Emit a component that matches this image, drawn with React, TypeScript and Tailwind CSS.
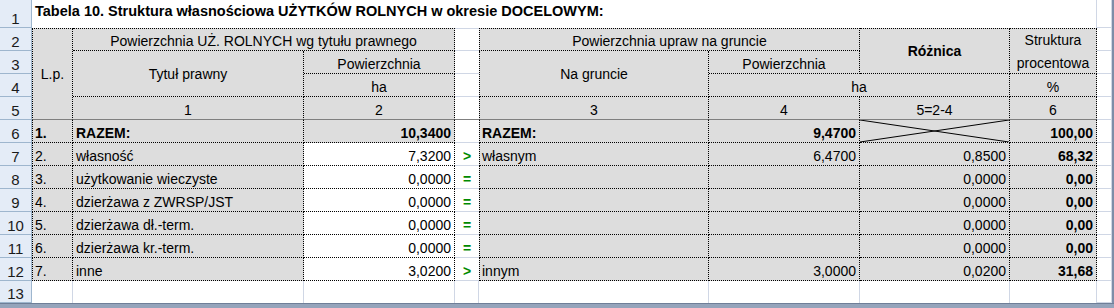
import React from "react";

// excel-like borders: one arbitrary property per side so nothing collides
const R = "[border-right:1px_dotted_#000]";
const B = "[border-bottom:1px_dotted_#000]";
const T = "[border-top:1px_dotted_#000]";
const L = "[border-left:1px_dotted_#000]";
const SEP = "[border-bottom:1px_solid_#7f7f7f]";
const GR = "[border-right:1px_solid_#d0d7e5]";
const GB = "[border-bottom:1px_solid_#d0d7e5]";
const GT = "[border-top:1px_solid_#d0d7e5]";
const GRAY = "bg-[#dddddd]";

const ROW = [
  "row-start-1",
  "row-start-2",
  "row-start-3",
  "row-start-4",
  "row-start-5",
  "row-start-6",
  "row-start-7",
  "row-start-8",
  "row-start-9",
  "row-start-10",
  "row-start-11",
  "row-start-12",
  "row-start-13",
];

type DataRow = {
  lp: string;
  label: string;
  area: string;
  sign: string;
  crop: string;
  cropArea: string;
  diff: string | null;
  pct: string;
  total?: boolean;
};

const rows: DataRow[] = [
  { lp: "1.", label: "RAZEM:", area: "10,3400", sign: "", crop: "RAZEM:", cropArea: "9,4700", diff: null, pct: "100,00", total: true },
  { lp: "2.", label: "własność", area: "7,3200", sign: ">", crop: "własnym", cropArea: "6,4700", diff: "0,8500", pct: "68,32" },
  { lp: "3.", label: "użytkowanie wieczyste", area: "0,0000", sign: "=", crop: "", cropArea: "", diff: "0,0000", pct: "0,00" },
  { lp: "4.", label: "dzierżawa z ZWRSP/JST", area: "0,0000", sign: "=", crop: "", cropArea: "", diff: "0,0000", pct: "0,00" },
  { lp: "5.", label: "dzierżawa dł.-term.", area: "0,0000", sign: "=", crop: "", cropArea: "", diff: "0,0000", pct: "0,00" },
  { lp: "6.", label: "dzierżawa kr.-term.", area: "0,0000", sign: "=", crop: "", cropArea: "", diff: "0,0000", pct: "0,00" },
  { lp: "7.", label: "inne", area: "3,0200", sign: ">", crop: "innym", cropArea: "3,0000", diff: "0,0200", pct: "31,68" },
];

const hdr = "flex items-center justify-center text-center";
const one = "flex items-end justify-center pb-[1px]";
const left = "flex items-end pl-[2px] pb-[1px] whitespace-nowrap overflow-hidden";
const right = "flex items-end justify-end pr-[3px] pb-[1px] whitespace-nowrap";

function Cross() {
  return (
    <svg className="h-full w-full" viewBox="0 0 149 22" preserveAspectRatio="none">
      <line x1="0" y1="0" x2="149" y2="22" stroke="#000" strokeWidth="1" vectorEffect="non-scaling-stroke" />
      <line x1="0" y1="22" x2="149" y2="0" stroke="#000" strokeWidth="1" vectorEffect="non-scaling-stroke" />
    </svg>
  );
}

export default function App() {
  return (
    <div className="flex h-[308px] w-[1114px] flex-col overflow-hidden bg-white font-['Liberation_Sans',Arial,sans-serif] text-[14px] leading-[16px] text-black">
      <div className="flex">
        <div className="grid grid-cols-[32px_41px_231px_151px_24px_230px_151px_150px_87px_15px] grid-rows-[28px_repeat(11,23px)_22px]">
          {/* row numbers */}
          {ROW.map((r, i) => (
            <div
              key={r}
              className={`${r} col-start-1 flex items-end justify-center bg-[#e4ecf7] text-[15px] leading-[17px] text-[#1a1a1a] [border-right:1px_solid_#9eb6ce] [border-bottom:1px_solid_#9eb6ce]`}
            >
              {i + 1}
            </div>
          ))}

          {/* title */}
          <div className={`row-start-1 col-start-2 col-span-8 flex items-start pl-[3px] pt-[3px] text-[14.5px] font-bold leading-[17px] whitespace-nowrap ${GR}`}>
            Tabela 10. Struktura własnościowa UŻYTKÓW ROLNYCH w okresie DOCELOWYM:
          </div>

          {/* header, left part */}
          <div className={`row-start-2 row-span-4 col-start-2 ${GRAY} ${hdr} ${T} ${L} ${R} ${SEP}`}>L.p.</div>
          <div className={`row-start-2 col-start-3 col-span-2 ${GRAY} ${one} ${T} ${R} ${B}`}>
            Powierzchnia UŻ. ROLNYCH wg tytułu prawnego
          </div>
          <div className={`row-start-3 row-span-2 col-start-3 ${GRAY} ${hdr} ${R} ${B}`}>Tytuł prawny</div>
          <div className={`row-start-3 col-start-4 ${GRAY} ${one} ${R} ${B}`}>Powierzchnia</div>
          <div className={`row-start-4 col-start-4 ${GRAY} ${one} ${R} ${B}`}>ha</div>
          <div className={`row-start-5 col-start-3 ${GRAY} ${one} ${R} ${SEP}`}>1</div>
          <div className={`row-start-5 col-start-4 ${GRAY} ${one} ${R} ${SEP}`}>2</div>

          {/* gap column */}
          <div className={`row-start-2 col-start-5 ${GT} ${GB}`} />
          <div className={`row-start-3 col-start-5 ${GB}`} />
          <div className={`row-start-4 col-start-5 ${GB}`} />
          <div className={`row-start-5 col-start-5 ${SEP}`} />

          {/* header, right part */}
          <div className={`row-start-2 col-start-6 col-span-2 ${GRAY} ${one} ${T} ${L} ${R} ${B}`}>
            Powierzchnia upraw na gruncie
          </div>
          <div className={`row-start-2 row-span-2 col-start-8 ${GRAY} ${hdr} font-bold ${T} ${R} ${B}`}>Różnica</div>
          <div className={`row-start-2 row-span-2 col-start-9 ${GRAY} ${hdr} flex-col leading-[23px] pt-[1px] ${T} ${R} ${B}`}>
            <span>Struktura</span>
            <span>procentowa</span>
          </div>
          <div className={`row-start-3 row-span-2 col-start-6 ${GRAY} ${hdr} ${L} ${R} ${B}`}>Na gruncie</div>
          <div className={`row-start-3 col-start-7 ${GRAY} ${one} ${R} ${B}`}>Powierzchnia</div>
          <div className={`row-start-4 col-start-7 col-span-2 ${GRAY} ${one} ${R} ${B}`}>ha</div>
          <div className={`row-start-4 col-start-9 ${GRAY} ${one} ${R} ${B}`}>%</div>
          <div className={`row-start-5 col-start-6 ${GRAY} ${one} ${L} ${R} ${SEP}`}>3</div>
          <div className={`row-start-5 col-start-7 ${GRAY} ${one} ${R} ${SEP}`}>4</div>
          <div className={`row-start-5 col-start-8 ${GRAY} ${one} ${R} ${SEP}`}>5=2-4</div>
          <div className={`row-start-5 col-start-9 ${GRAY} ${one} ${R} ${SEP}`}>6</div>

          {/* data rows */}
          {rows.map((d, i) => {
            const r = ROW[i + 5];
            const bold = d.total ? "font-bold" : "";
            return (
              <React.Fragment key={d.lp}>
                <div className={`${r} col-start-2 ${GRAY} ${left} ${bold} ${L} ${R} ${B}`}>{d.lp}</div>
                <div className={`${r} col-start-3 ${GRAY} ${left} pl-[3px] ${bold} ${R} ${B}`}>{d.label}</div>
                <div className={`${r} col-start-4 ${d.total ? GRAY : "bg-white"} ${right} ${bold} ${R} ${B}`}>{d.area}</div>
                <div className={`${r} col-start-5 flex items-end justify-center pb-[1px] font-bold text-[#008a00] ${GB}`}>
                  {d.sign}
                </div>
                <div className={`${r} col-start-6 ${GRAY} ${left} ${bold} ${L} ${R} ${B}`}>{d.crop}</div>
                <div className={`${r} col-start-7 ${GRAY} ${right} ${bold} ${R} ${B}`}>{d.cropArea}</div>
                <div className={`${r} col-start-8 ${GRAY} ${d.diff === null ? "" : right} ${R} ${B}`}>
                  {d.diff === null ? <Cross /> : d.diff}
                </div>
                <div className={`${r} col-start-9 ${GRAY} ${right} font-bold ${R} ${B}`}>{d.pct}</div>
              </React.Fragment>
            );
          })}

          {/* empty row 13 */}
          <div className={`row-start-13 col-start-2 ${GR}`} />
          <div className={`row-start-13 col-start-3 ${GR}`} />
          <div className={`row-start-13 col-start-4 ${GR}`} />
          <div className={`row-start-13 col-start-5 ${GR}`} />
          <div className={`row-start-13 col-start-6 ${GR}`} />
          <div className={`row-start-13 col-start-7 ${GR}`} />
          <div className={`row-start-13 col-start-8 ${GR}`} />
          <div className={`row-start-13 col-start-9 ${GR}`} />

          {/* column past the table */}
          {ROW.map((r) => (
            <div key={`i-${r}`} className={`${r} col-start-10 ${GR} ${GB}`} />
          ))}
        </div>
        <div className="w-[2px] bg-[#7e8ea8]" />
      </div>
      <div className="h-[5px] border-t border-[#6f7f98] bg-[#95a4bb]" />
    </div>
  );
}
